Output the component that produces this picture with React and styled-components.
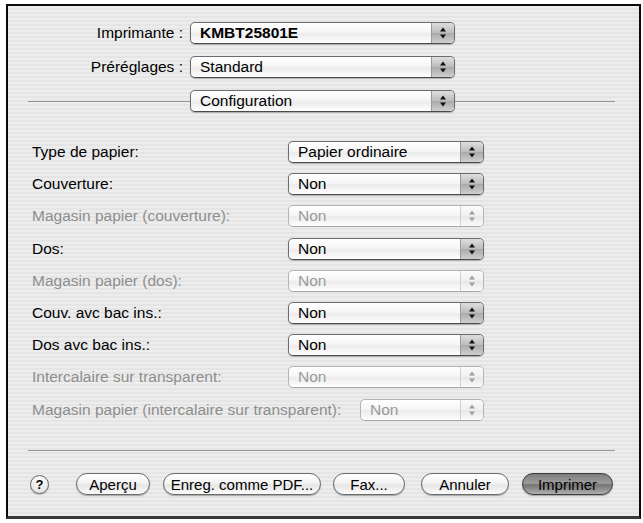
import React from "react";
import styled, { createGlobalStyle } from "styled-components";

const GlobalStyle = createGlobalStyle`
  html, body {
    margin: 0;
    padding: 0;
    background: #ffffff;
  }
  body {
    font-family: "Liberation Sans", Arial, sans-serif;
    font-size: 15.5px;
    color: #000;
  }
`;

const Dialog = styled.div`
  box-sizing: border-box;
  margin: 4px 0 0 6px;
  width: 635px;
  height: 515px;
  border: 2px solid #0a0a0a;
  border-bottom: 3px solid #3a3a3a;
  box-shadow: 0 1px 0 #8a8a8a;
  background: repeating-linear-gradient(
    to bottom,
    #ededed 0px,
    #ededed 2px,
    #e5e5e5 2px,
    #e5e5e5 4px
  );
  display: flex;
  flex-direction: column;
`;

const TopGrid = styled.div`
  display: grid;
  grid-template-columns: 175px 265px;
  column-gap: 7px;
  row-gap: 12px;
  align-items: center;
  padding-top: 16px;
`;

const TopLabel = styled.div`
  text-align: right;
  white-space: nowrap;
`;

const SectionRow = styled.div`
  display: flex;
  align-items: center;
  margin: 12px 24px 0 20px;
`;

const Rule = styled.div`
  height: 1px;
  background: #959595;
  flex: ${(p) => (p.$width ? `0 0 ${p.$width}px` : "1 1 auto")};
`;

const Fields = styled.div`
  display: flex;
  flex-direction: column;
  gap: 10.2px;
  margin: 29px 0 0 24px;
  width: 452px;
`;

const FieldRow = styled.div`
  display: flex;
  align-items: center;
  justify-content: space-between;
  height: 22px;
`;

const FieldLabel = styled.div`
  white-space: nowrap;
  color: ${(p) => (p.$disabled ? "#8e8e8e" : "#000")};
`;

const PopupBox = styled.div`
  box-sizing: border-box;
  display: flex;
  align-items: stretch;
  height: 22px;
  width: ${(p) => p.$width}px;
  border: 1px solid ${(p) => (p.$disabled ? "#b4b4b4" : "#6c6c6c")};
  border-bottom-color: ${(p) => (p.$disabled ? "#a8a8a8" : "#4a4a4a")};
  border-radius: 5px;
  background: linear-gradient(
    to bottom,
    #ffffff 0%,
    #f6f6f6 45%,
    #ebebeb 55%,
    #ffffff 100%
  );
  box-shadow: ${(p) =>
    p.$disabled ? "none" : "0 1px 1px rgba(0, 0, 0, 0.25)"};
  overflow: hidden;
`;

const PopupText = styled.div`
  flex: 1;
  display: flex;
  align-items: center;
  padding-left: 9px;
  font-weight: ${(p) => (p.$bold ? "bold" : "normal")};
  color: ${(p) => (p.$disabled ? "#9a9a9a" : "#000")};
  white-space: nowrap;
`;

const ArrowCap = styled.div`
  width: 22px;
  display: flex;
  align-items: center;
  justify-content: center;
  border-left: 1px solid ${(p) => (p.$disabled ? "#d0d0d0" : "#9a9a9a")};
  background: ${(p) =>
    p.$disabled
      ? "linear-gradient(to bottom, #fbfbfb, #f0f0f0 50%, #e8e8e8 51%, #fafafa)"
      : "linear-gradient(to bottom, #dedede, #bcbcbc 50%, #aaaaaa 51%, #cfcfcf)"};
`;

const Footer = styled.div`
  margin-top: auto;
  padding-bottom: 21px;
`;

const BottomRule = styled.div`
  height: 1px;
  background: #959595;
  margin: 0 24px 22px 20px;
`;

const ButtonRow = styled.div`
  display: flex;
  align-items: center;
  padding-left: 22px;
`;

const HelpButton = styled.div`
  box-sizing: border-box;
  width: 19px;
  height: 19px;
  border-radius: 50%;
  border: 1px solid #6a6a6a;
  background: radial-gradient(circle at 50% 30%, #ffffff, #dcdcdc);
  display: flex;
  align-items: center;
  justify-content: center;
  font-weight: bold;
  font-size: 13px;
  margin-right: 27px;
  box-shadow: 0 1px 1px rgba(0, 0, 0, 0.25);
`;

const PillButton = styled.div`
  box-sizing: border-box;
  width: ${(p) => p.$width}px;
  height: 22px;
  margin-right: ${(p) => p.$gap}px;
  border-radius: 11px;
  border: 1px solid ${(p) => (p.$primary ? "#3c3c3c" : "#6a6a6a")};
  background: ${(p) =>
    p.$primary
      ? "linear-gradient(to bottom, #7e7e7e, #9c9c9c 45%, #747474 55%, #b0b0b0)"
      : "linear-gradient(to bottom, #ffffff, #f4f4f4 45%, #e6e6e6 55%, #fbfbfb)"};
  box-shadow: 0 1px 1px rgba(0, 0, 0, 0.3);
  display: flex;
  align-items: center;
  justify-content: center;
  white-space: nowrap;
  font-size: 15px;
  color: #000;
`;

const Arrows = ({ disabled }) => (
  <svg width="8" height="12" viewBox="0 0 8 12">
    <path d="M4 0.5 L7 4.5 L1 4.5 Z" fill={disabled ? "#a0a0a0" : "#111"} />
    <path d="M4 11.5 L7 7.5 L1 7.5 Z" fill={disabled ? "#a0a0a0" : "#111"} />
  </svg>
);

const Popup = ({ value, width, disabled, bold }) => (
  <PopupBox $width={width} $disabled={disabled}>
    <PopupText $disabled={disabled} $bold={bold}>
      {value}
    </PopupText>
    <ArrowCap $disabled={disabled}>
      <Arrows disabled={disabled} />
    </ArrowCap>
  </PopupBox>
);

const fields = [
  { label: "Type de papier:", value: "Papier ordinaire" },
  { label: "Couverture:", value: "Non" },
  { label: "Magasin papier (couverture):", value: "Non", disabled: true },
  { label: "Dos:", value: "Non" },
  { label: "Magasin papier (dos):", value: "Non", disabled: true },
  { label: "Couv. avc bac ins.:", value: "Non" },
  { label: "Dos avc bac ins.:", value: "Non" },
  { label: "Intercalaire sur transparent:", value: "Non", disabled: true },
  {
    label: "Magasin papier (intercalaire sur transparent):",
    value: "Non",
    disabled: true,
    width: 124
  }
];

const buttons = [
  { text: "Aperçu", width: 74, gap: 13 },
  { text: "Enreg. comme PDF...", width: 158, gap: 12 },
  { text: "Fax...", width: 72, gap: 16 },
  { text: "Annuler", width: 88, gap: 13 },
  { text: "Imprimer", width: 91, gap: 0, primary: true }
];

export default function App() {
  return (
    <>
      <GlobalStyle />
      <Dialog>
        <TopGrid>
          <TopLabel>Imprimante :</TopLabel>
          <Popup value="KMBT25801E" width={265} bold />
          <TopLabel>Préréglages :</TopLabel>
          <Popup value="Standard" width={265} />
        </TopGrid>

        <SectionRow>
          <Rule $width={162} />
          <Popup value="Configuration" width={265} />
          <Rule />
        </SectionRow>

        <Fields>
          {fields.map((f) => (
            <FieldRow key={f.label}>
              <FieldLabel $disabled={f.disabled}>{f.label}</FieldLabel>
              <Popup
                value={f.value}
                width={f.width || 196}
                disabled={f.disabled}
              />
            </FieldRow>
          ))}
        </Fields>

        <Footer>
          <BottomRule />
          <ButtonRow>
            <HelpButton>?</HelpButton>
            {buttons.map((b) => (
              <PillButton
                key={b.text}
                $width={b.width}
                $gap={b.gap}
                $primary={b.primary}
              >
                {b.text}
              </PillButton>
            ))}
          </ButtonRow>
        </Footer>
      </Dialog>
    </>
  );
}
